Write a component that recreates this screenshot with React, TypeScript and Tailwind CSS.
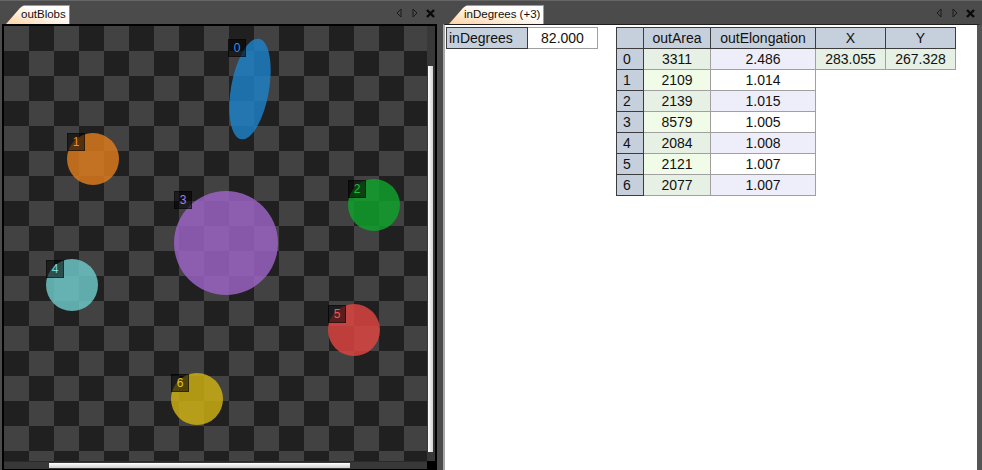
import React from "react";

type Blob = {
  id: number;
  fill: string;
  text: string;
  cx: number;
  cy: number;
  r?: number;
  rx?: number;
  ry?: number;
  rot?: number;
  lx: number;
  ly: number;
};

const blobs: Blob[] = [
  { id: 0, fill: "#1f7fc4", text: "#2d95e8", cx: 250, cy: 89, rx: 19, ry: 51, rot: 10, lx: 228, ly: 39 },
  { id: 1, fill: "#d97a1e", text: "#f08c22", cx: 93, cy: 159, r: 26, lx: 67, ly: 133 },
  { id: 2, fill: "#0fa02a", text: "#26bb3c", cx: 374, cy: 205, r: 26, lx: 348, ly: 180 },
  { id: 3, fill: "#9a62c2", text: "#a87ae2", cx: 226, cy: 243, r: 52, lx: 174, ly: 191 },
  { id: 4, fill: "#6cc6c6", text: "#7cdada", cx: 72, cy: 285, r: 26, lx: 46, ly: 260 },
  { id: 5, fill: "#d9443f", text: "#f05a55", cx: 354, cy: 330, r: 26, lx: 328, ly: 305 },
  { id: 6, fill: "#caae14", text: "#e2c61a", cx: 197, cy: 399, r: 26, lx: 171, ly: 374 },
];

const rows = [
  { area: "3311", elong: "2.486" },
  { area: "2109", elong: "1.014" },
  { area: "2139", elong: "1.015" },
  { area: "8579", elong: "1.005" },
  { area: "2084", elong: "1.008" },
  { area: "2121", elong: "1.007" },
  { area: "2077", elong: "1.007" },
];

function PanelButtons() {
  return (
    <div className="flex items-center gap-[8px] pb-[6px]">
      <svg width="6" height="10" viewBox="0 0 6 10">
        <polygon points="5,1 1,5 5,9" fill="none" stroke="#1a1a1a" strokeWidth="1" />
      </svg>
      <svg width="6" height="10" viewBox="0 0 6 10" className="ml-[2px]">
        <polygon points="1,1 5,5 1,9" fill="none" stroke="#1a1a1a" strokeWidth="1" />
      </svg>
      <svg width="9" height="9" viewBox="0 0 9 9">
        <path d="M1 1 L8 8 M8 1 L1 8" stroke="#0a0a0a" strokeWidth="2.4" />
      </svg>
    </div>
  );
}

function Tab({ label }: { label: string }) {
  return (
    <div className="h-[19px] pl-[15px] pr-[3px] flex items-center text-[11.5px] text-[#101010] border-t border-r border-[#9a9a9a] bg-linear-to-bl from-white from-35% to-[#ffd2a0] [clip-path:polygon(0_100%,14px_3px,18px_0,100%_0,100%_100%)]">
      {label}
    </div>
  );
}

export default function App() {
  return (
    <div className="w-[982px] h-[470px] bg-[#4b4b4b] border-t border-[#666] flex overflow-hidden font-['Liberation_Sans',Arial,sans-serif]">
      {/* left panel: outBlobs */}
      <div className="w-[437px] flex flex-col pl-[2px]">
        <div className="h-[23px] flex items-end pl-[4px] pr-[2px]">
          <Tab label="outBlobs" />
          <div className="ml-auto">
            <PanelButtons />
          </div>
        </div>
        <div className="flex-1 flex flex-col border-t-2 border-l-2 border-r-2 border-b border-black">
          <div className="flex-1 flex">
            <div className="relative flex-1 bg-[repeating-conic-gradient(#202020_0_25%,#424242_0_50%)] bg-[length:50px_50px]">
              <svg className="absolute inset-0" width="423" height="435" viewBox="4 26 423 435">
                {blobs.map((b) =>
                  b.r ? (
                    <circle key={b.id} cx={b.cx} cy={b.cy} r={b.r} fill={b.fill} fillOpacity="0.85" />
                  ) : (
                    <ellipse
                      key={b.id}
                      cx={b.cx}
                      cy={b.cy}
                      rx={b.rx}
                      ry={b.ry}
                      transform={`rotate(${b.rot} ${b.cx} ${b.cy})`}
                      fill={b.fill}
                      fillOpacity="0.85"
                    />
                  )
                )}
              </svg>
              {blobs.map((b) => (
                <div
                  key={b.id}
                  className="absolute w-[18px] h-[18px] bg-black/55 border border-black/40 flex items-center justify-center text-[12px] leading-none"
                  style={{ left: b.lx - 4, top: b.ly - 26, color: b.text }}
                >
                  {b.id}
                </div>
              ))}
            </div>
            {/* vertical scrollbar */}
            <div className="w-[8px] bg-[#383838] flex flex-col pt-[40px] pb-[9px] pl-[1px] pr-[2px]">
              <div className="flex-1 bg-linear-to-r from-white to-[#d4d4d4]" />
            </div>
          </div>
          <div className="h-[8px] flex">
            <div className="flex-1 bg-[#383838] py-[1px] pl-[45px] pr-[77px] border-t border-[#2a2a2a]">
              <div className="h-full bg-linear-to-b from-white to-[#cfcfcf]" />
            </div>
            <div className="w-[8px] bg-black" />
          </div>
        </div>
      </div>

      {/* right panel: inDegrees (+3) */}
      <div className="flex-1 flex flex-col ml-[6px]">
        <div className="h-[23px] flex items-end pl-[6px] pr-[7px]">
          <Tab label="inDegrees (+3)" />
          <div className="ml-auto">
            <PanelButtons />
          </div>
        </div>
        <div className="flex-1 bg-white border-t border-t-[#1e1e1e] border-l-2 border-l-[#a8a8a8] border-r-[5px] border-r-[#555] pl-[1px] pt-[2px] flex items-start gap-[18px] text-[14px] text-[#111]">
          <div className="flex h-[22px]">
            <div className="w-[82px] border border-[#3c3c3c] bg-[#c6cfdc] pl-[2px] flex items-center">inDegrees</div>
            <div className="w-[70px] border border-l-0 border-[#a0a0a0] flex items-center justify-center">82.000</div>
          </div>

          <div className="flex flex-col border-l border-t border-[#3c3c3c]">
            <div className="flex h-[21px]">
              <div className="w-[27px] bg-[#c6cfdc] border-r border-b border-[#3c3c3c]" />
              <div className="w-[67px] bg-[#c6cfdc] border-r border-b border-[#3c3c3c] flex items-center justify-center">outArea</div>
              <div className="w-[105px] bg-[#c6cfdc] border-r border-b border-[#3c3c3c] flex items-center justify-center">outElongation</div>
              <div className="w-[70px] bg-[#c6cfdc] border-r border-b border-[#3c3c3c] flex items-center justify-center">X</div>
              <div className="w-[70px] bg-[#c6cfdc] border-r border-b border-[#3c3c3c] flex items-center justify-center">Y</div>
            </div>
            {rows.map((r, i) => (
              <div key={i} className="flex h-[21px]">
                <div className="w-[27px] bg-[#c6cfdc] border-r border-b border-[#3c3c3c] pl-[6px] flex items-center">{i}</div>
                <div
                  className={`w-[67px] border-r border-b border-[#a0a0a0] flex items-center justify-center ${
                    i % 2 === 0 ? "bg-[#e6f0e4]" : "bg-[#f1fce8]"
                  }`}
                >
                  {r.area}
                </div>
                <div
                  className={`w-[105px] border-r border-b border-[#a0a0a0] flex items-center justify-center ${
                    i % 2 === 0 ? "bg-[#eeeefa]" : "bg-white"
                  }`}
                >
                  {r.elong}
                </div>
                {i === 0 && (
                  <>
                    <div className="w-[70px] bg-[#e6f0e4] border-r border-b border-[#a0a0a0] flex items-center justify-center">283.055</div>
                    <div className="w-[70px] bg-[#e6f0e4] border-r border-b border-[#a0a0a0] flex items-center justify-center">267.328</div>
                  </>
                )}
              </div>
            ))}
          </div>
        </div>
      </div>
    </div>
  );
}
